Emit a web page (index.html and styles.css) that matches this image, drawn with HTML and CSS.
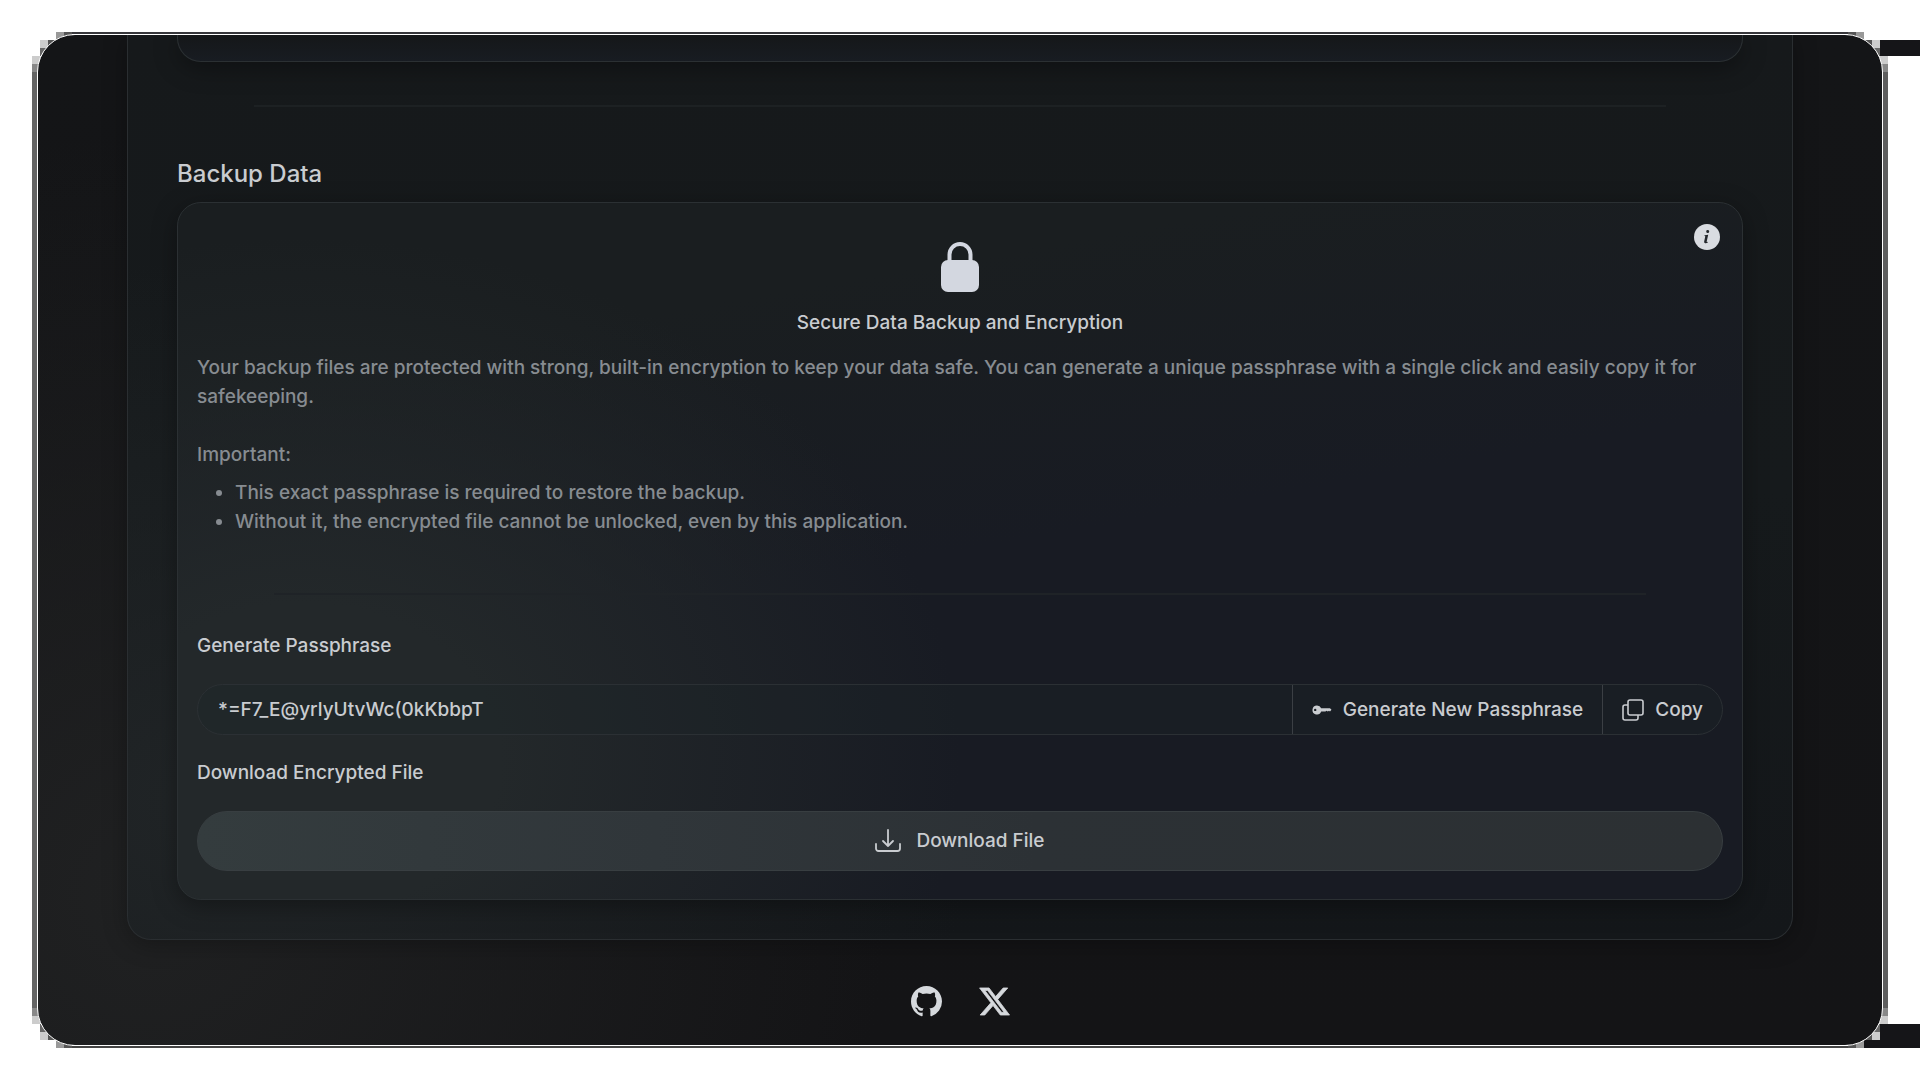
FILE: index.html
```
<!DOCTYPE html>
<html lang="en">
<head>
<meta charset="utf-8">
<meta name="viewport" content="width=device-width, initial-scale=1">
<title>Backup Data</title>
<link rel="stylesheet" href="styles.css">
</head>
<body>
<svg width="0" height="0" class="defs" aria-hidden="true">
  <symbol id="corner" viewBox="0 0 40 40" shape-rendering="crispEdges">
    <path fill="#555" d="M32 0h8v8h-8zM16 8h8v8h-8z"/>
    <path fill="#999" d="M24 0h8v8h-8z"/>
    <path fill="#666" d="M8 16h8v8H8z"/>
    <path fill="#ccc" d="M8 8h8v8H8zM0 24h8v8H0z"/>
    <path fill="#888" d="M0 32h8v8H0z"/>
  </symbol>
</svg>
<div class="frame">
  <span class="bar bar-top"></span>
  <span class="bar bar-bottom"></span>
  <svg class="corner top-left" aria-hidden="true"><use href="#corner"/></svg>
  <svg class="corner top-right" aria-hidden="true"><use href="#corner"/></svg>
  <svg class="corner bottom-left" aria-hidden="true"><use href="#corner"/></svg>
  <svg class="corner bottom-right" aria-hidden="true"><use href="#corner"/></svg>
  <div class="screen">
    <main class="panel">
      <div class="card card-previous"></div>
      <hr class="divider">
      <h2 class="section-title">Backup Data</h2>
      <section class="card backup">
        <button class="info" type="button" aria-label="More information">
          <svg viewBox="0 0 26 26" width="26" height="26"><circle cx="13" cy="13" r="13" fill="#d9dce1"/><path fill="#24282d" d="M13.900 6a1.500 1.500 0 1 1-.4 3 1.500 1.500 0 0 1 .4-3zM10.600 11.200l3.600-.5-1.500 6.700c-.1.600.1.800.5.700l.8-.3-.2.800c-.9.700-1.800.9-2.600.7-.9-.2-1.200-1-1-2l1-4.600c.1-.5 0-.7-.8-.8z"/></svg>
        </button>
        <svg class="lock" viewBox="0 0 38 50" aria-hidden="true"><path fill="none" stroke="#d3d7e0" stroke-width="4" d="M8.500 20v-7.500a10.500 10.500 0 0 1 21 0V20"/><rect y="18" width="38" height="32" rx="7" fill="#d3d7e0"/></svg>
        <h3 class="card-title">Secure Data Backup and Encryption</h3>
        <div class="description">
          <p>Your backup files are protected with strong, built-in encryption to keep your data safe. You can generate a unique passphrase with a single click and easily copy it for safekeeping.</p>
          <p>Important:</p>
          <ul>
            <li>This exact passphrase is required to restore the backup.</li>
            <li>Without it, the encrypted file cannot be unlocked, even by this application.</li>
          </ul>
        </div>
        <hr class="divider">
        <label class="label" for="passphrase">Generate Passphrase</label>
        <div class="input-group">
          <input id="passphrase" type="text" value="*=F7_E@yrlyUtvWc(0kKbbpT" readonly>
          <button type="button">
            <svg viewBox="0 0 20 12" width="20" height="12" aria-hidden="true"><path fill="currentColor" fill-rule="evenodd" d="M5 1.500a4.500 4.500 0 0 1 4.200 2.800H18l1.500 1.500L18 7.500l-1-.7-1.200.7-1.200-.7-1.200.7H9.200A4.500 4.500 0 1 1 5 1.500zM3.200 4.700a1.200 1.200 0 1 0 0 2.400 1.200 1.200 0 0 0 0-2.400z"/></svg>
            Generate New Passphrase
          </button>
          <button type="button">
            <svg viewBox="0 0 22 22" width="22" height="22" fill="none" stroke="currentColor" stroke-width="1.600" stroke-linejoin="round" aria-hidden="true"><rect x="6" y="1" width="15" height="15" rx="2"/><path d="M6 6H3a2 2 0 0 0-2 2v11a2 2 0 0 0 2 2h11a2 2 0 0 0 2-2v-3"/></svg>
            Copy
          </button>
        </div>
        <label class="label" for="download">Download Encrypted File</label>
        <button class="download" id="download" type="button">
          <svg viewBox="0 0 26 24" width="26" height="24" fill="none" stroke="currentColor" stroke-width="1.800" stroke-linecap="round" stroke-linejoin="round" aria-hidden="true"><path d="M13 1v16M8 12l5 5 5-5M1 15v4.500A2.500 2.500 0 0 0 3.500 22h19a2.500 2.500 0 0 0 2.500-2.500V15"/></svg>
          Download File
        </button>
      </section>
    </main>
    <footer class="social">
      <a href="#github" aria-label="GitHub"><svg viewBox="0 0 16 16" width="31" height="31"><path fill="currentColor" d="M8 0C3.580 0 0 3.580 0 8c0 3.540 2.290 6.530 5.470 7.590.4.070.55-.17.55-.38 0-.19-.01-.82-.01-1.490-2.010.37-2.530-.49-2.690-.94-.09-.23-.48-.94-.82-1.130-.28-.15-.68-.52-.01-.53.63-.01 1.080.58 1.230.82.72 1.210 1.870.87 2.330.66.07-.52.28-.87.51-1.070-1.780-.2-3.640-.89-3.640-3.950 0-.87.31-1.590.82-2.150-.08-.2-.36-1.020.08-2.120 0 0 .67-.21 2.200.82.64-.18 1.320-.27 2-.27s1.360.09 2 .27c1.530-1.040 2.200-.82 2.200-.82.44 1.100.16 1.920.08 2.120.51.56.82 1.270.82 2.150 0 3.070-1.870 3.750-3.650 3.950.29.25.54.73.54 1.480 0 1.070-.01 1.930-.01 2.200 0 .21.15.46.55.38A8.010 8.010 0 0 0 16 8c0-4.420-3.580-8-8-8z"/></svg></a>
      <a href="#x" aria-label="X"><svg viewBox="18 18 476 476" width="31" height="31"><path fill="currentColor" stroke="currentColor" stroke-width="12" d="M389.200 48h70.600L305.600 224.200 487 464H345L233.700 318.600 106.500 464H35.800L200.700 275.500 26.800 48H172.400L272.900 180.900 389.200 48zM364.400 421.800h39.100L151.100 88h-42L364.400 421.800z"/></svg></a>
    </footer>
  </div>
</div>
</body>
</html>
```
FILE: styles.css
```
* { box-sizing: border-box; }

body {
  margin: 0;
  padding: 32px;
  background: #fff;
  color: #c9ccd0;
  font: 500 19px/28px Inter, sans-serif;
  overflow-x: hidden;
}

h2, h3, p, ul { margin: 0; font-weight: 500; }

.defs { position: absolute; }

/* Outer frame: thin grey edges with stepped corners */
.frame {
  position: relative;
  padding: 2px 5px;
  background:
    linear-gradient(#646464, #646464) 0 50% / 5px calc(100% - 80px) no-repeat,
    linear-gradient(#5e5e5e, #5e5e5e) 100% 50% / 5px calc(100% - 80px) no-repeat,
    linear-gradient(#37373b, #37373b) 50% 0 / calc(100% - 80px) 2px no-repeat,
    linear-gradient(#444, #444) 50% 100% / calc(100% - 80px) 2px no-repeat;
}

.corner { position: absolute; width: 40px; height: 40px; }
.top-left { left: 0; top: 0; }
.top-right { right: 0; top: 0; transform: scaleX(-1); }
.bottom-left { left: 0; bottom: 0; transform: scaleY(-1); }
.bottom-right { right: 0; bottom: 0; transform: scale(-1); }

.bar { position: absolute; right: -32px; background: #151518; }
.bar-top { top: 8px; width: 40px; height: 16px; }
.bar-bottom { bottom: 0; width: 56px; height: 24px; }

.screen {
  position: relative;
  overflow: hidden;
  padding: 0 89px;
  border: 1px solid #fff;
  border-radius: 38px;
  background:
    radial-gradient(ellipse 40% 75% at 6% 85%, #202122, transparent),
    linear-gradient(#141517, #141416);
}

.panel {
  padding: 0 49px 39px;
  border: 1px solid #2a2e31;
  border-top: 0;
  border-radius: 0 0 24px 24px;
  background:
    radial-gradient(ellipse 45% 60% at 6% 85%, #212527, transparent),
    linear-gradient(#16191b, #161a1c 50%, #14171a);
  box-shadow: 0 4px 24px rgba(0, 0, 0, .3);
}

.card {
  position: relative;
  border: 1px solid #2b3033;
  border-radius: 24px;
  background:
    radial-gradient(ellipse 42% 75% at 8% 80%, #23282a 30%, transparent),
    linear-gradient(170deg, #1a1e20 20%, #181b23 50%);
  box-shadow: 0 6px 24px rgba(0, 0, 0, .35);
}

.card-previous {
  height: 27px;
  border-top: 0;
  border-radius: 0 0 24px 24px;
  background: linear-gradient(#151719, #181c22);
}

.divider {
  height: 2px;
  margin: 0 77px;
  border: 0;
  background: #1d2123;
}

.panel > .divider { margin-top: 43px; }

.section-title {
  margin: 51px 0 12px;
  font-size: 24px;
  line-height: 32px;
}

.backup {
  display: flex;
  flex-direction: column;
  padding: 39px 19px 28px;
}

.backup > .divider { margin: 57px 77px 37px; background: #1f2327; }

.info {
  position: absolute;
  top: 21px;
  right: 22px;
  padding: 0;
  border: 0;
  background: none;
}

.info svg, .social svg { display: block; }

.lock { align-self: center; width: 38px; height: 50px; }

.card-title {
  margin: 17px 0 16px;
  font-size: 19px;
  line-height: 28px;
  text-align: center;
}

.description {
  color: #878c91;
  line-height: 29px;
}

.description p + p { margin-top: 29px; }
.description ul { margin-top: 9px; padding-left: 38px; }

.label { display: block; }

button { color: inherit; font: inherit; }

.input-group {
  display: flex;
  height: 51px;
  margin: 24px 0;
  border: 1px solid #2b3034;
  border-radius: 26px;
  background: rgba(30, 38, 40, .35);
  overflow: hidden;
}

.input-group input {
  flex: 1;
  min-width: 0;
  padding: 0 20px;
  border: 0;
  background: none;
  color: inherit;
  font: inherit;
}

.input-group button {
  display: flex;
  align-items: center;
  gap: 11px;
  padding: 0 19px;
  border: 0;
  border-left: 1px solid #3b3f44;
  background: none;
}

.download {
  display: flex;
  align-items: center;
  justify-content: center;
  gap: 15px;
  height: 60px;
  margin-top: 24px;
  border: 1px solid #383e41;
  border-radius: 30px;
  background: linear-gradient(90deg, #343c3e, #30363a 30%, #2c3135 55%, #2c3033);
}

.social {
  display: flex;
  justify-content: center;
  gap: 37px;
  padding: 46px 0 28px;
}

.social a { color: #d6d9dd; }
```
